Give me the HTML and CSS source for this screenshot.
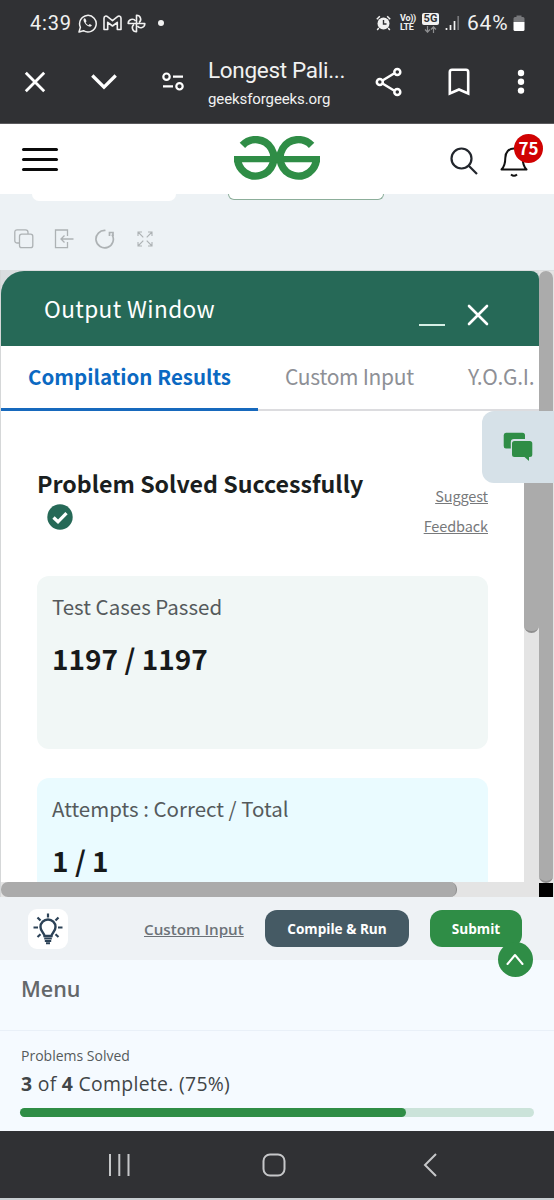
FILE: index.html
```html
<!DOCTYPE html>
<html lang="en">
<head>
  <meta charset="UTF-8" />
  <meta name="viewport" content="width=device-width, initial-scale=1.0"/>
  <title>Longest Palindrome</title>
  <link rel="stylesheet" href="styles.css">
</head>
<body>
  <div class="status-bar">
    <span class="clock">4:39</span>
    <svg class="whatsapp" width="19" height="20" viewBox="0 0 19 20" fill="none" stroke="#f1f1f1" stroke-width="1.5">
      <path d="M1 19l1.400-4.800A8.300 8.300 0 1 1 5.500 17.700z" stroke-linejoin="round"/>
      <path d="M6.500 5.300c-1 .6-1.300 1.800-.5 3.500 1 2.200 2.800 4 5 4.800 1.500.4 2.500-.1 2.900-1.300l-2.200-1.200-1.200 1.100c-1.300-.6-2.200-1.500-2.800-2.800l.8-1.200-1-2.500z" fill="#f1f1f1" stroke="none"/>
    </svg>
    <svg class="gmail" width="19" height="16" viewBox="0 0 19 16" fill="none" stroke="#f1f1f1" stroke-width="1.600" stroke-linejoin="round">
      <path d="M1 14.500V3.200C1 1 3.200.5 4.500 1.700L9.500 5.700l5-4C15.800.5 18 1 18 3.200v11.300h-3.700V7.300L9.500 11 4.700 7.300v7.200z"/>
    </svg>
    <svg class="pinwheel" width="19" height="19" viewBox="0 0 19 19" fill="none" stroke="#f1f1f1" stroke-width="1.600" stroke-linejoin="round">
      <path d="M9.500 9.500V1.200a4.100 4.100 0 0 1 2.500 7.400"/>
      <path d="M9.500 9.500V1.200a4.100 4.100 0 0 1 2.500 7.400" transform="rotate(90 9.500 9.500)"/>
      <path d="M9.500 9.500V1.200a4.100 4.100 0 0 1 2.500 7.400" transform="rotate(180 9.500 9.500)"/>
      <path d="M9.500 9.500V1.200a4.100 4.100 0 0 1 2.500 7.400" transform="rotate(270 9.500 9.500)"/>
    </svg>
    <span class="dot"></span>
    <svg class="alarm" width="15" height="16" viewBox="0 0 15 16">
      <circle cx="7.500" cy="8.500" r="6" fill="#f1f1f1"/>
      <path d="M.8 4.200L3.800 1.200M14.200 4.200L11.200 1.200M2.800 13L1.200 15M12.200 13l1.600 2" stroke="#f1f1f1" stroke-width="1.500"/>
      <path d="M7.500 5v4h3" fill="none" stroke="#303134" stroke-width="1.400"/>
    </svg>
    <span class="volte"><b>Vo))</b><b>LTE</b></span>
    <span class="fiveg"><b>5G</b>
      <svg width="13" height="7" viewBox="0 0 13 7" fill="none" stroke="#8d8e90" stroke-width="1.200"><path d="M3.500 0v6M1 3.500l2.500 2.700L6 3.500M9.500 7V1M7 3.500L9.500.8 12 3.500"/></svg>
    </span>
    <svg class="signal" width="15" height="16" viewBox="0 0 15 16">
      <path d="M1.500 13v2M5.500 10v5M9.500 6v9" stroke="#f1f1f1" stroke-width="1.700"/>
      <path d="M13.200 1v14" stroke="#77787b" stroke-width="1.700"/>
    </svg>
    <span class="battery-text">64%</span>
    <svg class="battery" width="12" height="17" viewBox="0 0 12 17">
      <path d="M3.500.5h5V2h1.500q1.500 0 1.500 1.500V7H.5V3.500Q.5 2 2 2h1.500z" fill="#77787b"/>
      <path d="M.5 7h11v7.500q0 1.500-1.500 1.500H2Q.5 16 .5 14.500z" fill="#fff"/>
    </svg>
  </div>

  <div class="browser-bar">
    <svg class="b-close" width="22" height="22" viewBox="0 0 22 22" stroke="#fff" stroke-width="2.800"><path d="M1.800 1.800L20.200 20.200M20.200 1.800L1.800 20.200"/></svg>
    <svg class="b-down" width="26" height="16" viewBox="0 0 26 16" fill="none" stroke="#fff" stroke-width="3.300"><path d="M1.300 1.500L13 13.200 24.700 1.500"/></svg>
    <svg class="b-tune" width="22" height="19" viewBox="0 0 22 19" fill="none" stroke="#fff" stroke-width="2.200"><circle cx="4.500" cy="4.700" r="3.200"/><path d="M11 4.700h10M1 14.300h10"/><circle cx="17.500" cy="14.300" r="3.200"/></svg>
    <div class="page-info">
      <div class="page-title">Longest Pali...</div>
      <div class="page-url">geeksforgeeks.org</div>
    </div>
    <svg class="b-share" width="28" height="30" viewBox="0 0 28 30" fill="none" stroke="#fff" stroke-width="2.500"><path d="M7.500 13.500L19 6.500M7.500 16.500L19 23.500"/><circle cx="4.800" cy="15" r="3"/><circle cx="22.300" cy="5" r="3"/><circle cx="22.300" cy="25" r="3"/></svg>
    <svg class="b-mark" width="22" height="28" viewBox="0 0 22 28" fill="none" stroke="#fff" stroke-width="2.600"><path d="M1.800 25.500V4Q1.800 1.800 4 1.800h14Q20.200 1.800 20.200 4v21.500L11 21.500z"/></svg>
    <svg class="b-more" width="8" height="26" viewBox="0 0 8 26" fill="#fff"><circle cx="4" cy="4" r="3.200"/><circle cx="4" cy="12.800" r="3.200"/><circle cx="4" cy="21.600" r="3.200"/></svg>
  </div>

  <header class="site-header">
    <div class="burger"><i></i><i></i><i></i></div>
    <svg class="logo" width="86" height="44" viewBox="0 0 86 44" fill="none" stroke="#2f8d46" stroke-width="7.400">
      <path d="M8.400 9.400A18.200 18.200 0 1 1 3.500 22"/>
      <path d="M77.600 9.400A18.200 18.200 0 1 0 82.500 22"/>
      <path d="M0 23.200h86" stroke-width="6.300"/>
    </svg>
    <svg class="search" width="28" height="28" viewBox="0 0 28 28" fill="none" stroke="#22262c" stroke-width="2.200"><circle cx="11.500" cy="11.500" r="10"/><path d="M18.700 18.700L27 27"/></svg>
    <div class="bell-wrap">
      <svg width="28" height="32" viewBox="0 0 28 32" fill="none" stroke="#111" stroke-width="2"><path d="M1.500 23.500C5 20 5.300 17 5.300 12 5.300 6 9 2.500 14 2.500S22.700 6 22.700 12c0 5 .3 8 3.800 11.500z" stroke-linejoin="round"/><path d="M11 28.500q3 2.600 6 0"/></svg>
      <span class="badge">75</span>
    </div>
  </header>

  <div class="editor-top">
    <div class="selects">
      <div class="select-white"></div>
      <div class="select-outline"></div>
    </div>
    <div class="tools">
      <svg width="20" height="20" viewBox="0 0 20 20"><path d="M5 14H3.500Q.8 14 .8 11.500V3.200Q.8.800 3.200.8h8.300Q14 .8 14 3.200V5"/><rect x="5.500" y="5.200" width="13.300" height="13.500" rx="2.200"/></svg>
      <svg width="20" height="20" viewBox="0 0 20 20"><path d="M13.500 7V1H1.500v17.700h12V13M19.500 10H7M10.500 6.500L7 10l3.500 3.500"/></svg>
      <svg class="reset" width="20" height="20" viewBox="0 0 20 20"><path d="M10.500 1.500A8.700 8.700 0 1 0 17 5.500"/><path d="M14.500 7V3.500H18V7"/></svg>
      <svg class="expand" width="16" height="16" viewBox="0 0 16 16"><path d="M1 5V1h4M1 1l5.300 5.300M15 5V1h-4M15 1L9.700 6.300M1 11v4h4M1 15l5.300-5.300M15 11v4h-4M15 15L9.700 9.700"/></svg>
    </div>
  </div>

  <main class="frame">
    <div class="window">
      <div class="window-header">
        <span class="window-title">Output Window</span>
        <span class="minimize"></span>
        <svg width="22" height="22" viewBox="0 0 22 22" stroke="#fff" stroke-width="2.600" stroke-linecap="round"><path d="M2 2l18 18M20 2L2 20"/></svg>
      </div>
      <nav class="tabs">
        <div class="tab active"><span>Compilation Results</span></div>
        <div class="tab tab-input"><span>Custom Input</span></div>
        <div class="tab tab-yogi"><span>Y.O.G.I.</span></div>
      </nav>
      <div class="pane">
        <div class="results">
          <div class="result-head">
            <div class="solved">
              <h3>Problem Solved Successfully</h3>
              <svg width="26" height="26" viewBox="0 0 26 26"><circle cx="13" cy="13" r="12.700" fill="#266957"/><path d="M6.500 13.500l4.500 4.300 8.500-8.600" fill="none" stroke="#fff" stroke-width="3.300"/></svg>
            </div>
            <a class="feedback"><span>Suggest</span><span>Feedback</span></a>
          </div>
          <div class="card card-tests">
            <div class="card-label"><span>Test Cases Passed</span></div>
            <div class="card-value">1197 / 1197</div>
          </div>
          <div class="card card-attempts">
            <div class="card-label"><span>Attempts : Correct / Total</span></div>
            <div class="card-value">1 / 1</div>
          </div>
        </div>
        <div class="inner-scroll"><div class="thumb"></div></div>
      </div>
      <div class="h-scroll"><div class="thumb"></div></div>
    </div>
    <div class="outer-scroll"><div class="thumb"></div><div class="corner"></div></div>
    <div class="chat">
      <svg width="30" height="30" viewBox="0 0 30 30" fill="#2f8d46"><path d="M3 .7h16.500Q22 .7 22 3.200V7H11Q7.800 7 7.800 10.200v6.300H3Q.7 16.500.7 14V3.200Q.7.700 3 .7z"/><path d="M11.500 9h15.300q2.500 0 2.500 2.500v11q0 2.500-2.500 2.500H26v4l-4.500-4h-10Q9 25 9 22.500v-11Q9 9 11.500 9z"/></svg>
    </div>
  </main>

  <div class="actions">
    <div class="hint">
      <svg width="32" height="32" viewBox="0 0 32 32" fill="none" stroke="#2c4257" stroke-width="2.400">
        <path d="M12.500 23c0-2.700-4-4.200-4-9a7.500 7.500 0 0 1 15 0c0 4.800-4 6.300-4 9z"/>
        <path d="M12.200 25.500h7.600M12.800 28h6.400M14 30.300h4" stroke-width="2"/>
        <path d="M16 .5v4M1.500 14.500H6M26 14.500h4.500M5.500 4.500l3 3M26.500 4.500l-3 3M5.500 24l3-2.700M26.500 24l-3-2.700" stroke-width="2.200"/>
      </svg>
    </div>
    <a class="custom-link">Custom Input</a>
    <button class="btn btn-run"><span>Compile &amp; Run</span></button>
    <button class="btn btn-submit"><span>Submit</span></button>
    <div class="to-top">
      <svg width="18" height="12" viewBox="0 0 18 12" fill="none" stroke="#fff" stroke-width="2" stroke-linecap="round" stroke-linejoin="round"><path d="M1.500 11L9 2l7.500 9"/></svg>
    </div>
  </div>

  <section class="menu">
    <h2><span>Menu</span></h2>
    <div class="progress-block">
      <div class="p-label"><span>Problems Solved</span></div>
      <div class="p-text"><span><b>3</b> of <b>4</b> Complete. (75%)</span></div>
      <div class="progress"><div class="fill" style="width:75%"></div></div>
    </div>
  </section>

  <div class="nav-bar">
    <svg class="n-recent" width="22" height="22" viewBox="0 0 22 22" stroke="#c6c7c9" stroke-width="2"><path d="M2 0v22M11.300 0v22M20.500 0v22"/></svg>
    <svg class="n-home" width="24" height="24" viewBox="0 0 24 24" fill="none" stroke="#c6c7c9" stroke-width="2"><rect x="1.500" y="1.500" width="21" height="21" rx="6.500"/></svg>
    <svg class="n-back" width="14" height="24" viewBox="0 0 14 24" fill="none" stroke="#c6c7c9" stroke-width="2"><path d="M13 1L2 12l11 11"/></svg>
  </div>
</body>
</html>
```

FILE: styles.css
```css
* {
  box-sizing: border-box;
}

body {
  margin: 0;
  width: 554px;
  height: 1200px;
  overflow: hidden;
  background: #c8ced2;
  font-family: "Noto Sans CJK SC", sans-serif;
  white-space: nowrap;
}

svg {
  display: block;
  flex: none;
}

h2, h3 {
  margin: 0;
}

/* phone status bar */
.status-bar {
  display: flex;
  align-items: center;
  height: 46px;
  padding-left: 30px;
  background: #303134;
  color: #f1f1f1;
  font-family: Roboto, sans-serif;
  font-size: 20px;
}

.clock { width: 48px; letter-spacing: 0.8px; }
.gmail { margin-left: 6px; }
.pinwheel { margin-left: 5px; }

.dot {
  width: 6px;
  height: 6px;
  margin-left: 12px;
  border-radius: 50%;
  background: #f1f1f1;
}

.alarm { margin-left: 212px; }

.volte {
  display: flex;
  flex-direction: column;
  width: 16px;
  margin-left: 9px;
  font-size: 9px;
  letter-spacing: -0.3px;
  line-height: 9px;
}

.fiveg {
  display: flex;
  flex-direction: column;
  align-items: center;
  gap: 1px;
  width: 17px;
  height: 20px;
  margin: 0 0 1px 6px;
}

.fiveg b {
  width: 17px;
  height: 12px;
  border-radius: 2px;
  background: #f1f1f1;
  color: #303134;
  font-size: 11px;
  line-height: 12px;
  text-align: center;
}

.signal { margin-left: 6px; }
.battery-text { width: 46px; margin-left: 7px; font-size: 21px; letter-spacing: 0.8px; }

/* browser toolbar */
.browser-bar {
  display: flex;
  align-items: center;
  height: 78px;
  padding: 0 0 6px 24px;
  background: #303134;
  border-bottom: 1px solid #5b5a5d;
  color: #f1f1f1;
  font-family: Roboto, sans-serif;
}

.b-down { margin-left: 45px; }
.b-tune { margin-left: 45px; }
.page-info { width: 140px; margin: 4px 0 0 24px; }
.page-title { font-size: 22.500px; letter-spacing: -0.3px; line-height: 30px; }
.page-url { font-size: 15px; letter-spacing: -0.1px; line-height: 28px; }
.b-share { margin-left: 27px; }
.b-mark { margin-left: 45px; }
.b-more { margin-left: 47px; }

/* site header */
.site-header {
  display: flex;
  align-items: center;
  height: 70px;
  padding-left: 22px;
  background: #fff;
}

.burger {
  display: flex;
  flex-direction: column;
  gap: 7px;
  width: 36px;
}

.burger i {
  height: 3px;
  border-radius: 2px;
  background: #0b0b0b;
}

.logo { margin: 0 0 2px 176px; }
.search { margin: 3px 0 0 130px; }

.bell-wrap {
  position: relative;
  margin: 6px 0 0 22px;
}

.badge {
  position: absolute;
  top: -12px;
  left: 14px;
  width: 29px;
  height: 29px;
  border-radius: 50%;
  background: #d00202;
  color: #fff;
  font: bold 17px/27px "Noto Sans CJK SC", sans-serif;
  text-align: center;
}

/* editor toolbar */
.editor-top {
  height: 76px;
  background: #edf2f5;
}

.selects {
  display: flex;
  padding-left: 32px;
}

.select-white {
  width: 144px;
  height: 7px;
  border-radius: 0 0 7px 7px;
  background: #fff;
}

.select-outline {
  width: 156px;
  height: 6px;
  margin-left: 52px;
  border: 1px solid #8cae9a;
  border-top: none;
  border-radius: 0 0 6px 6px;
  background: #fff;
}

.tools {
  display: flex;
  align-items: center;
  padding: 28px 0 0 14px;
}

.tools svg {
  margin-right: 20px;
  fill: none;
  stroke: #adb2b4;
  stroke-width: 1.300;
}

.tools .reset { margin-left: 1px; margin-right: 22px; stroke-width: 1.700; }
.tools .expand { stroke-width: 1.100; }

/* output window */
.frame {
  position: relative;
  display: flex;
  height: 627px;
  padding-top: 1px;
  background: #dadddf;
  border-left: 1px solid #d5d7d8;
}

.window {
  display: flex;
  flex-direction: column;
  width: 538px;
}

.window-header {
  display: flex;
  align-items: center;
  height: 75px;
  padding-left: 43px;
  border-radius: 23px 8px 0 0;
  background: #266957;
  color: #fff;
}

.window-title { width: 375px; font-size: 22.600px; letter-spacing: 0.4px; line-height: 75px; }
.minimize { width: 26px; height: 2px; margin: 32px 22px 0 0; background: #d5efe5; }
.window-header svg { margin-top: 13px; }

.tabs {
  display: flex;
  height: 65px;
  background: #fff;
}

.tab {
  height: 65px;
  border-bottom: 2px solid #dcdcdf;
  color: #8e9096;
  font-size: 21px;
  letter-spacing: -0.3px;
  line-height: 61px;
}

.tab.active {
  width: 257px;
  padding-left: 27px;
  border-bottom: 3px solid #1769bd;
  color: #0b69c2;
  font-size: 20.500px;
  letter-spacing: 0;
  font-weight: bold;
}

.tab-input { width: 182px; padding-left: 27px; }
.tab-yogi { flex: 1; padding-left: 28px; }

.pane {
  display: flex;
  height: 471px;
  overflow: hidden;
  background: #fff;
}

.results { width: 523px; padding: 55px 36px 0; }
.result-head { display: flex; justify-content: space-between; height: 110px; }

h3 {
  color: #1a1e20;
  font-size: 23.200px;
  line-height: 34px;
}

.solved svg { margin: 4px 0 0 10px; }

.feedback {
  display: flex;
  flex-direction: column;
  align-items: flex-end;
  padding-top: 15px;
  color: #77797b;
  font-size: 14.500px;
  letter-spacing: -0.1px;
  line-height: 30px;
  text-decoration: underline;
}

.card {
  width: 451px;
  height: 173px;
  margin-bottom: 29px;
  padding: 12px 15px;
  border-radius: 12px;
}

.card-tests { background: #f1f7f6; }
.card-attempts { background: #eafbff; }
.card-label { color: #555a5c; font-size: 20.500px; line-height: 36px; }
.card-value { margin-top: 14px; color: #17191a; font-size: 28px; font-weight: bold; line-height: 40px; }

.inner-scroll { width: 15px; background: #e4e4e4; }
.inner-scroll .thumb { height: 222px; border-radius: 0 0 8px 8px; background: #ababab; border-bottom: 2px solid #8e8e8e; }

.h-scroll { height: 15px; background: #e4e4e4; }
.h-scroll .thumb { width: 456px; height: 15px; border-radius: 7px; background: #ababab; border-right: 1px solid #8e8e8e; }

.outer-scroll { width: 15px; background: #e4e4e4; }
.outer-scroll .thumb { width: 14px; height: 612px; border-radius: 7px; background: #ababab; border-bottom: 2px solid #8e8e8e; }
.outer-scroll .corner { width: 14px; height: 14px; background: #000; }

.chat {
  position: absolute;
  top: 141px;
  right: 0;
  width: 72px;
  height: 72px;
  padding: 21px;
  border-radius: 12px 0 0 12px;
  background: #d6e1e8;
}

/* bottom actions */
.actions {
  position: relative;
  display: flex;
  align-items: center;
  height: 63px;
  padding-left: 28px;
  background: #eef2f5;
  font-family: "Open Sans", sans-serif;
}

.hint {
  width: 40px;
  height: 40px;
  padding: 4px;
  border-radius: 9px;
  background: #fff;
}

.custom-link {
  width: 121px;
  margin-left: 76px;
  color: #6c7278;
  font-size: 15.200px;
  font-weight: 600;
  text-decoration: underline;
}

.btn {
  height: 37px;
  padding: 0;
  border: none;
  border-radius: 12px;
  color: #fff;
  font-family: "Open Sans", sans-serif;
  font-size: 13.600px;
  font-weight: 700;
}

.btn-run { width: 144px; background: #455a64; }
.btn-submit { width: 92px; margin-left: 21px; background: #2f8d46; }

.to-top {
  position: absolute;
  top: 45px;
  left: 498px;
  width: 35px;
  height: 35px;
  padding: 11px 8px;
  border-radius: 50%;
  background: #2f8d46;
}

/* course menu */
.menu {
  height: 171px;
  background: #f5faff;
  font-family: "Open Sans", sans-serif;
}

h2 {
  height: 71px;
  padding-left: 21px;
  border-bottom: 1px solid #e9f0f8;
  color: #64676a;
  font-size: 21.500px;
  font-weight: 600;
  line-height: 58px;
}

.progress-block { padding: 14px 20px 0 21px; color: #414547; }
.p-label { font-size: 14px; line-height: 22px; color: #565a5c; }
.p-text { font-size: 19.400px; letter-spacing: 0.3px; line-height: 33px; }

.progress {
  height: 9px;
  margin: 8px 0 0 -1px;
  border-radius: 5px;
  background: #cbe3da;
}

.fill { height: 9px; border-radius: 5px; background: #2f8d46; }

/* android navigation */
.nav-bar {
  display: flex;
  align-items: center;
  height: 67px;
  padding-left: 108px;
  background: #303134;
}

.n-home { margin-left: 132px; }
.n-back { margin-left: 137px; }
```
